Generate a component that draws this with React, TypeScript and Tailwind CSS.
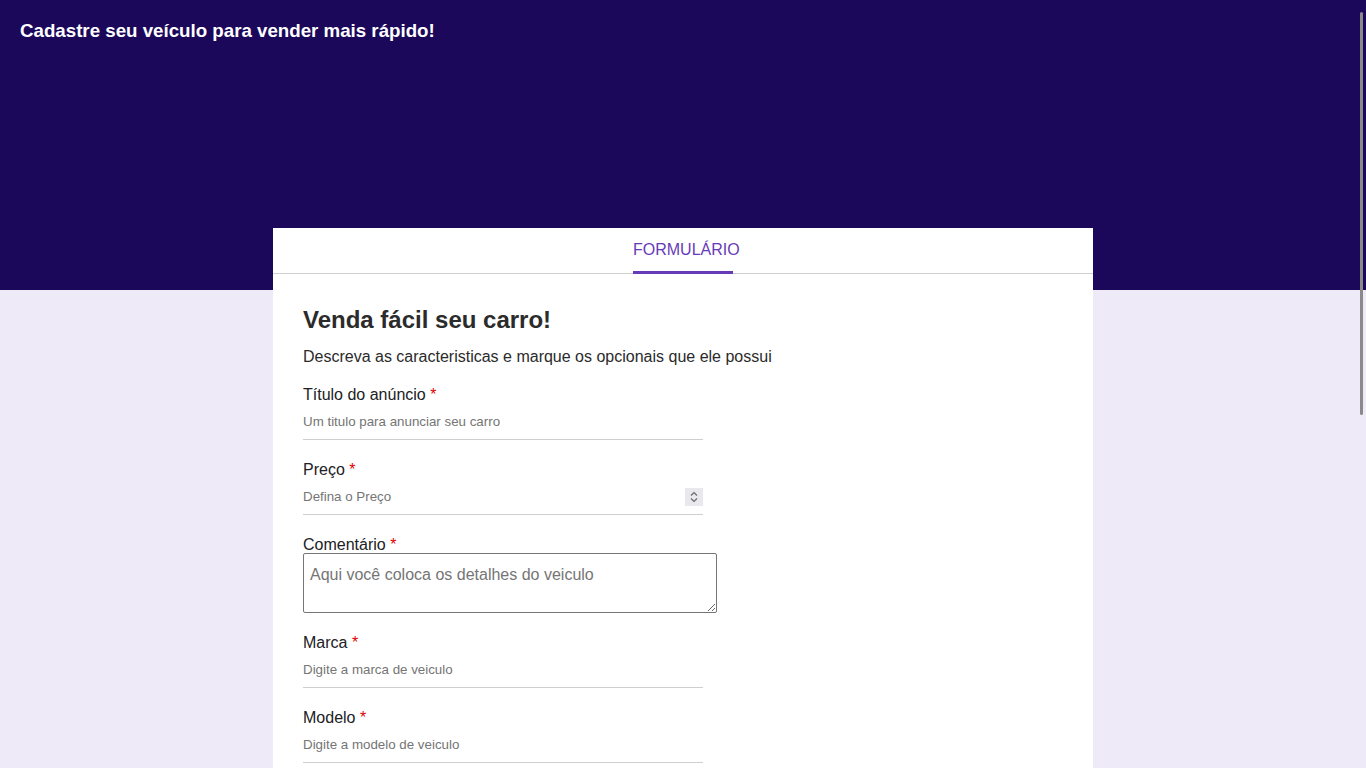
import React from "react";

const font = { fontFamily: '"Liberation Sans", Arial, sans-serif' };

function Label({ text }: { text: string }) {
  return (
    <div className="h-[18px] text-[16px] leading-[18px] text-[#202124]">
      {text} <span className="text-[#e00000]">*</span>
    </div>
  );
}

function LineField({ label, placeholder, spin }: { label: string; placeholder: string; spin?: boolean }) {
  return (
    <div className="mb-[21px] w-[400px]">
      <Label text={label} />
      <div className="flex h-[36px] items-center border-b border-[#cfcfcf]">
        <input
          className="h-full flex-1 bg-transparent text-[13.333px] text-[#202124] outline-none placeholder:text-[#757575]"
          style={font}
          placeholder={placeholder}
          readOnly
        />
        {spin && (
          <div className="flex h-[18px] w-[18px] items-center justify-center bg-[#e9e9ed]">
            <svg width="10" height="14" viewBox="0 0 10 14" fill="none" stroke="#6b6b6b" strokeWidth="1.2">
              <path d="M2 5.5 L5 2.5 L8 5.5" />
              <path d="M2 8.5 L5 11.5 L8 8.5" />
            </svg>
          </div>
        )}
      </div>
    </div>
  );
}

export default function App() {
  return (
    <div className="relative h-screen overflow-hidden bg-[#eeeaf8]" style={font}>
      <header className="h-[290px] bg-[#1b085a] px-5 pt-[20px]">
        <h1 className="text-[18.72px] font-bold leading-[22px] text-white">
          Cadastre seu veículo para vender mais rápido!
        </h1>
      </header>
      <main className="mx-auto -mt-[62px] w-[820px] bg-white pb-10">
        <div className="flex h-[46px] justify-center border-b border-[#cfcfcf]">
          <div className="relative flex w-[100px] items-center justify-start pb-[2px] text-[16px] whitespace-nowrap text-[#673ab7]">
            FORMULÁRIO
            <div className="absolute -bottom-px left-0 h-[3px] w-[100px] bg-[#673ab7]" />
          </div>
        </div>
        <div className="px-[30px] pt-[32px]">
          <h2 className="text-[24px] font-bold leading-[28px] text-[#2b2b2b]">Venda fácil seu carro!</h2>
          <p className="mt-[14px] text-[16px] leading-[18px] text-[#2b2b2b]">
            Descreva as caracteristicas e marque os opcionais que ele possui
          </p>
          <div className="mt-[20px]">
            <LineField label="Título do anúncio" placeholder="Um titulo para anunciar seu carro" />
            <LineField label="Preço" placeholder="Defina o Preço" spin />
            <div className="mb-[21px]">
              <Label text="Comentário" />
              <textarea
                className="-mt-px block h-[60px] w-[414px] rounded-[2px] border border-[#767676] px-[6px] pt-[12px] text-[16px] leading-[18px] text-[#202124] outline-none placeholder:text-[#757575]"
                style={font}
                placeholder="Aqui você coloca os detalhes do veiculo"
                readOnly
              />
            </div>
            <LineField label="Marca" placeholder="Digite a marca de veiculo" />
            <LineField label="Modelo" placeholder="Digite a modelo de veiculo" />
          </div>
        </div>
      </main>
      <div className="absolute right-[3px] top-[12px] h-[403px] w-[3px] rounded-full bg-[#8a8a8a]" />
    </div>
  );
}
